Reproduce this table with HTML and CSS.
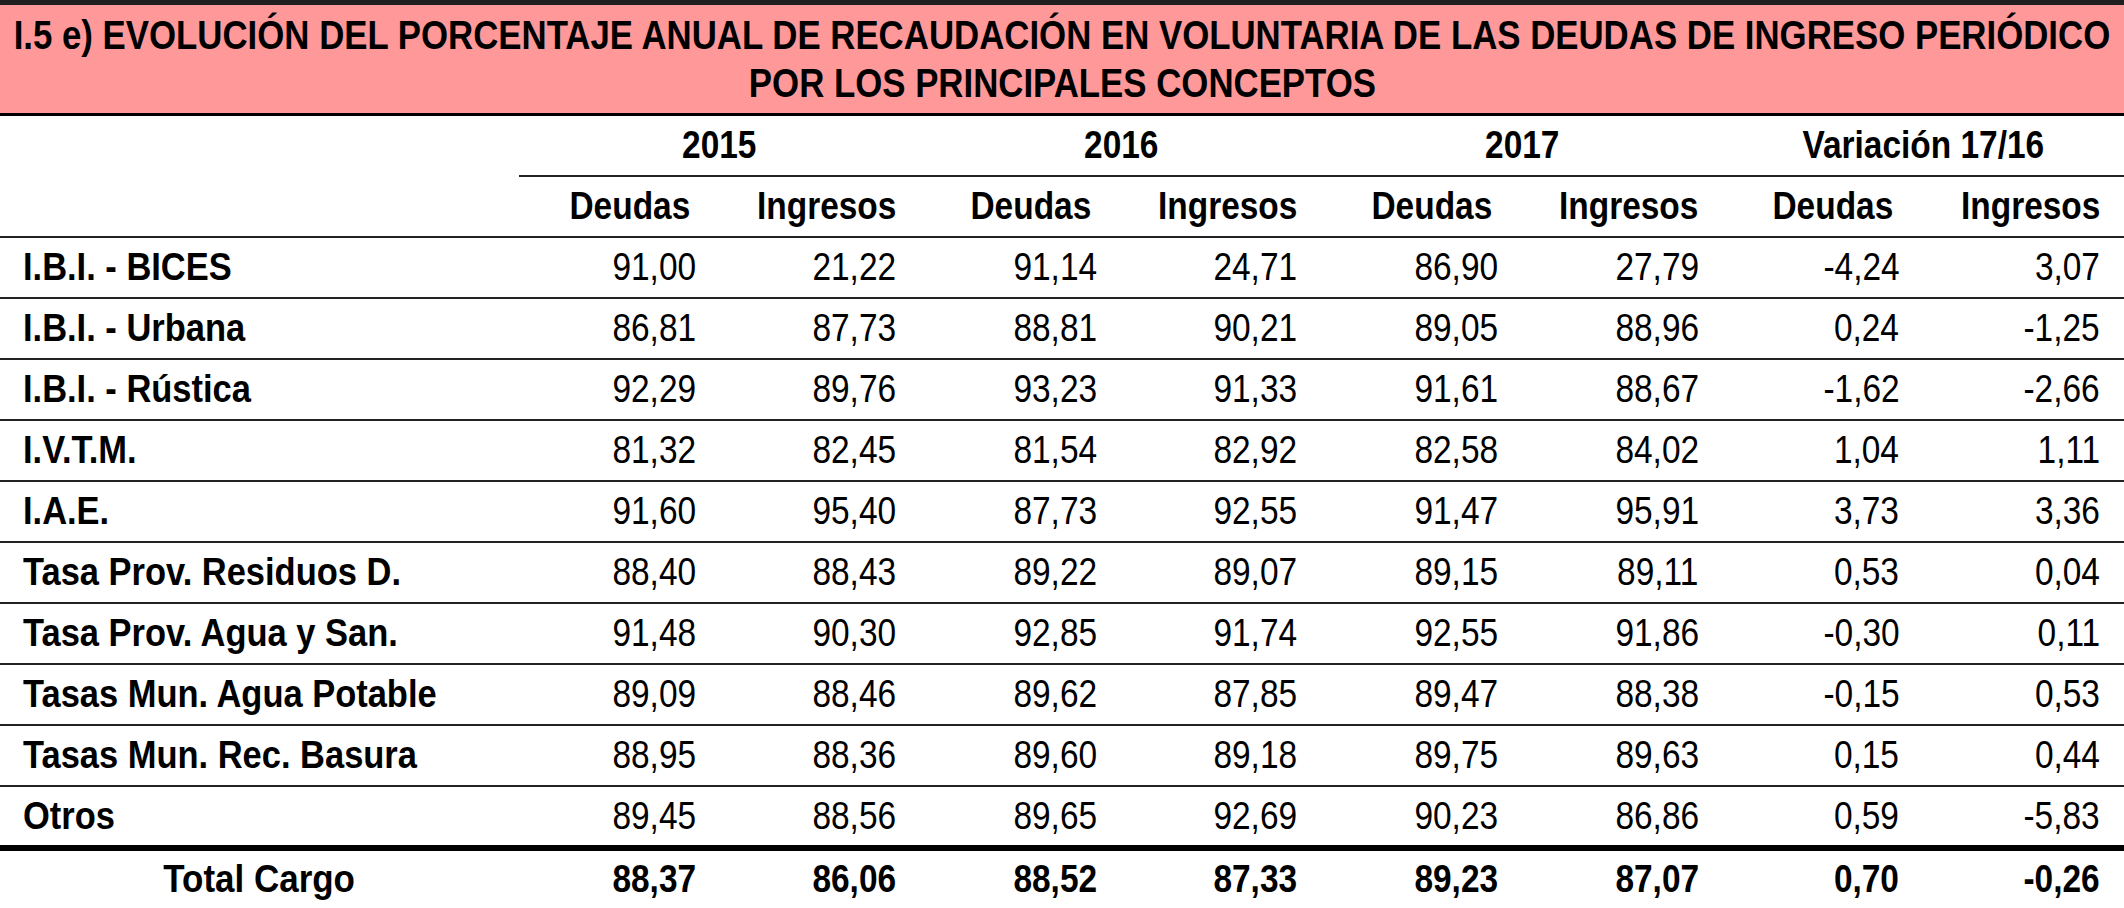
FILE: index.html
```html
<!DOCTYPE html>
<html lang="es">
<head>
<meta charset="utf-8">
<title>I.5 e) Evolución del porcentaje anual de recaudación</title>
<link rel="stylesheet" href="styles.css">
</head>
<body>
<div class="sheet">
  <div class="title">
    <span class="t">I.5 e) EVOLUCIÓN DEL PORCENTAJE ANUAL DE RECAUDACIÓN EN VOLUNTARIA DE LAS DEUDAS DE INGRESO PERIÓDICO</span>
    <span class="t">POR LOS PRINCIPALES CONCEPTOS</span>
  </div>

  <div class="row years">
    <div class="cell"></div>
    <div class="year-group">
      <div class="year"><span class="t">2015</span></div>
      <div class="year"><span class="t">2016</span></div>
      <div class="year"><span class="t">2017</span></div>
      <div class="year"><span class="t">Variación 17/16</span></div>
    </div>
  </div>

  <div class="row sub">
    <div class="cell"></div>
    <div class="cell num b"><span class="t">Deudas</span></div><div class="cell num b"><span class="t">Ingresos</span></div>
    <div class="cell num b"><span class="t">Deudas</span></div><div class="cell num b"><span class="t">Ingresos</span></div>
    <div class="cell num b"><span class="t">Deudas</span></div><div class="cell num b"><span class="t">Ingresos</span></div>
    <div class="cell num b"><span class="t">Deudas</span></div><div class="cell num b"><span class="t">Ingresos</span></div>
  </div>

  <div class="row"><div class="cell label"><span class="t">I.B.I. - BICES</span></div><div class="cell num"><span class="t">91,00</span></div><div class="cell num"><span class="t">21,22</span></div><div class="cell num"><span class="t">91,14</span></div><div class="cell num"><span class="t">24,71</span></div><div class="cell num"><span class="t">86,90</span></div><div class="cell num"><span class="t">27,79</span></div><div class="cell num"><span class="t">-4,24</span></div><div class="cell num"><span class="t">3,07</span></div></div>
  <div class="row"><div class="cell label"><span class="t">I.B.I. - Urbana</span></div><div class="cell num"><span class="t">86,81</span></div><div class="cell num"><span class="t">87,73</span></div><div class="cell num"><span class="t">88,81</span></div><div class="cell num"><span class="t">90,21</span></div><div class="cell num"><span class="t">89,05</span></div><div class="cell num"><span class="t">88,96</span></div><div class="cell num"><span class="t">0,24</span></div><div class="cell num"><span class="t">-1,25</span></div></div>
  <div class="row"><div class="cell label"><span class="t">I.B.I. - Rústica</span></div><div class="cell num"><span class="t">92,29</span></div><div class="cell num"><span class="t">89,76</span></div><div class="cell num"><span class="t">93,23</span></div><div class="cell num"><span class="t">91,33</span></div><div class="cell num"><span class="t">91,61</span></div><div class="cell num"><span class="t">88,67</span></div><div class="cell num"><span class="t">-1,62</span></div><div class="cell num"><span class="t">-2,66</span></div></div>
  <div class="row"><div class="cell label"><span class="t">I.V.T.M.</span></div><div class="cell num"><span class="t">81,32</span></div><div class="cell num"><span class="t">82,45</span></div><div class="cell num"><span class="t">81,54</span></div><div class="cell num"><span class="t">82,92</span></div><div class="cell num"><span class="t">82,58</span></div><div class="cell num"><span class="t">84,02</span></div><div class="cell num"><span class="t">1,04</span></div><div class="cell num"><span class="t">1,11</span></div></div>
  <div class="row"><div class="cell label"><span class="t">I.A.E.</span></div><div class="cell num"><span class="t">91,60</span></div><div class="cell num"><span class="t">95,40</span></div><div class="cell num"><span class="t">87,73</span></div><div class="cell num"><span class="t">92,55</span></div><div class="cell num"><span class="t">91,47</span></div><div class="cell num"><span class="t">95,91</span></div><div class="cell num"><span class="t">3,73</span></div><div class="cell num"><span class="t">3,36</span></div></div>
  <div class="row"><div class="cell label"><span class="t">Tasa Prov. Residuos D.</span></div><div class="cell num"><span class="t">88,40</span></div><div class="cell num"><span class="t">88,43</span></div><div class="cell num"><span class="t">89,22</span></div><div class="cell num"><span class="t">89,07</span></div><div class="cell num"><span class="t">89,15</span></div><div class="cell num"><span class="t">89,11</span></div><div class="cell num"><span class="t">0,53</span></div><div class="cell num"><span class="t">0,04</span></div></div>
  <div class="row"><div class="cell label"><span class="t">Tasa Prov. Agua y San.</span></div><div class="cell num"><span class="t">91,48</span></div><div class="cell num"><span class="t">90,30</span></div><div class="cell num"><span class="t">92,85</span></div><div class="cell num"><span class="t">91,74</span></div><div class="cell num"><span class="t">92,55</span></div><div class="cell num"><span class="t">91,86</span></div><div class="cell num"><span class="t">-0,30</span></div><div class="cell num"><span class="t">0,11</span></div></div>
  <div class="row"><div class="cell label"><span class="t">Tasas Mun. Agua Potable</span></div><div class="cell num"><span class="t">89,09</span></div><div class="cell num"><span class="t">88,46</span></div><div class="cell num"><span class="t">89,62</span></div><div class="cell num"><span class="t">87,85</span></div><div class="cell num"><span class="t">89,47</span></div><div class="cell num"><span class="t">88,38</span></div><div class="cell num"><span class="t">-0,15</span></div><div class="cell num"><span class="t">0,53</span></div></div>
  <div class="row"><div class="cell label"><span class="t">Tasas Mun. Rec. Basura</span></div><div class="cell num"><span class="t">88,95</span></div><div class="cell num"><span class="t">88,36</span></div><div class="cell num"><span class="t">89,60</span></div><div class="cell num"><span class="t">89,18</span></div><div class="cell num"><span class="t">89,75</span></div><div class="cell num"><span class="t">89,63</span></div><div class="cell num"><span class="t">0,15</span></div><div class="cell num"><span class="t">0,44</span></div></div>
  <div class="row last"><div class="cell label"><span class="t">Otros</span></div><div class="cell num"><span class="t">89,45</span></div><div class="cell num"><span class="t">88,56</span></div><div class="cell num"><span class="t">89,65</span></div><div class="cell num"><span class="t">92,69</span></div><div class="cell num"><span class="t">90,23</span></div><div class="cell num"><span class="t">86,86</span></div><div class="cell num"><span class="t">0,59</span></div><div class="cell num"><span class="t">-5,83</span></div></div>
  <div class="row total"><div class="cell label center"><span class="t">Total Cargo</span></div><div class="cell num b"><span class="t">88,37</span></div><div class="cell num b"><span class="t">86,06</span></div><div class="cell num b"><span class="t">88,52</span></div><div class="cell num b"><span class="t">87,33</span></div><div class="cell num b"><span class="t">89,23</span></div><div class="cell num b"><span class="t">87,07</span></div><div class="cell num b"><span class="t">0,70</span></div><div class="cell num b"><span class="t">-0,26</span></div></div>
</div>
</body>
</html>
```

FILE: styles.css
```css
html, body {
  margin: 0;
  padding: 0;
  background: #ffffff;
  overflow: hidden;
}

.sheet {
  width: 2124px;
  font-family: "Liberation Sans", Arial, sans-serif;
  color: #000;
}

.t {
  display: inline-block;
  white-space: nowrap;
  transform: scaleX(0.88);
}

.title {
  box-sizing: border-box;
  height: 116px;
  background: #ff9999;
  border-top: 5px solid #1e1e1e;
  border-bottom: 3px solid #000;
  padding-top: 6px;
  font-weight: bold;
  font-size: 40px;
  line-height: 48px;
  display: flex;
  flex-direction: column;
  align-items: center;
}

.title .t {
  transform: scaleX(0.87);
  transform-origin: center;
}

.row {
  box-sizing: border-box;
  display: grid;
  grid-template-columns: 519px repeat(8, 1fr);
  height: 61px;
  border-bottom: 2px solid #222;
  align-items: center;
  font-size: 38px;
}

.row.years {
  grid-template-columns: 519px 1fr;
  border-bottom: none;
  align-items: stretch;
}

.year-group {
  display: grid;
  grid-template-columns: repeat(4, 1fr);
  border-bottom: 2px solid #222;
  align-items: center;
}

.year {
  text-align: center;
  font-weight: bold;
}

.year .t {
  transform-origin: center;
}

.cell {
  padding: 0 24px;
  white-space: nowrap;
}

.label {
  font-weight: bold;
  padding-left: 23px;
}

.label .t {
  transform: scaleX(0.907);
  transform-origin: left center;
}

.label.center {
  text-align: center;
  padding-left: 24px;
}

.label.center .t {
  transform: scaleX(0.92);
  transform-origin: center;
}

.num {
  text-align: right;
}

.num .t {
  transform-origin: right center;
}

.b {
  font-weight: bold;
}

.row.last {
  height: 64px;
  border-bottom: 6px solid #000;
}

.row.total {
  height: 57px;
  border-bottom: none;
}
```
